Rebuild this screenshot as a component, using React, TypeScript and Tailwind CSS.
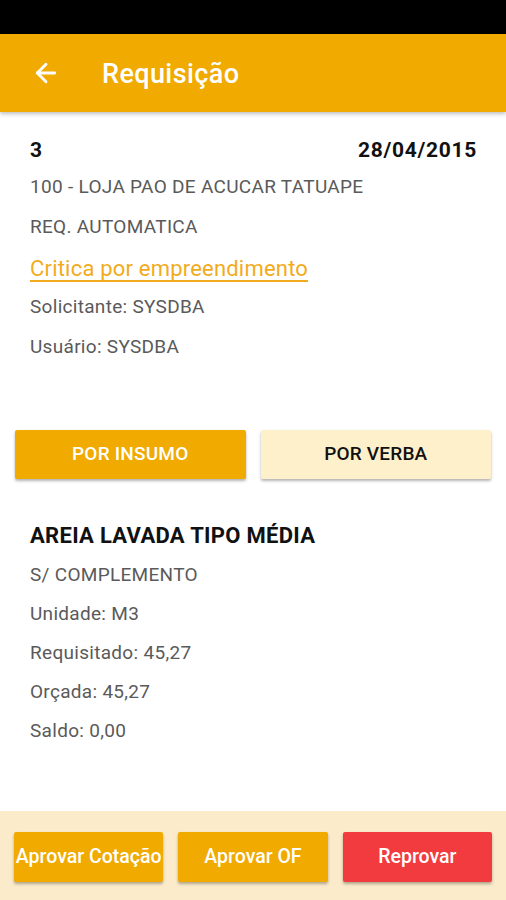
import { ArrowLeft } from 'lucide-react'

const DETAIL_LINES = ['S/ COMPLEMENTO', 'Unidade: M3', 'Requisitado: 45,27', 'Orçada: 45,27', 'Saldo: 0,00']

export default function App() {
  return (
    <div className="w-[506px] h-[900px] flex flex-col bg-white font-['Roboto',sans-serif] overflow-hidden">
      <div className="h-[34px] bg-black shrink-0" />

      {/* App bar */}
      <header className="h-[78px] shrink-0 bg-[#f0aa00] flex items-center shadow-[0_2px_4px_rgba(0,0,0,0.25)] z-10">
        <ArrowLeft className="ml-[31px] text-white" size={30} strokeWidth={2.3} />
        <h1 className="ml-[41px] mt-[2px] text-white font-medium text-[27px] tracking-[0.4px]">Requisição</h1>
      </header>

      <div className="flex-1 flex flex-col">
        {/* Requisition header */}
        <div className="px-[30px] pt-[27px]">
          <div className="flex justify-between items-center h-[24px]">
            <span className="text-[21px] font-bold text-[#111]">3</span>
            <span className="text-[21px] font-bold text-[#111] tracking-[0.7px] mr-[-1px]">28/04/2015</span>
          </div>
          <p className="mt-[12px] text-[19px] tracking-[0.3px] text-[#5a5a5a] leading-[24px]">100 - LOJA PAO DE ACUCAR TATUAPE</p>
          <p className="mt-[16px] text-[19px] tracking-[0.3px] text-[#5a5a5a] leading-[24px]">REQ. AUTOMATICA</p>
          <p className="mt-[18px] text-[22px] tracking-[0.2px] text-[#f2ab1c] underline underline-offset-[4px] decoration-[1.5px] leading-[24px]">Critica por empreendimento</p>
          <p className="mt-[14px] text-[19px] tracking-[0.3px] text-[#5a5a5a] leading-[24px]">Solicitante: SYSDBA</p>
          <p className="mt-[16px] text-[19px] tracking-[0.3px] text-[#5a5a5a] leading-[24px]">Usuário: SYSDBA</p>
        </div>

        {/* Tabs */}
        <div className="mt-[71px] px-[15px] flex gap-[15px]">
          <button className="flex-1 h-[49px] bg-[#f0aa00] text-white font-medium text-[19px] tracking-[0.2px] rounded-[2px] shadow-[0_2px_3px_rgba(0,0,0,0.3)]">
            POR INSUMO
          </button>
          <button className="flex-1 h-[49px] bg-[#fff0cc] text-[#111] font-medium text-[19px] tracking-[0.2px] rounded-[2px] shadow-[0_2px_3px_rgba(0,0,0,0.3)]">
            POR VERBA
          </button>
        </div>

        {/* Item */}
        <div className="px-[30px] pt-[45px]">
          <p className="text-[22px] font-bold tracking-[0.3px] text-[#111] leading-[24px]">AREIA LAVADA TIPO MÉDIA</p>
          {DETAIL_LINES.map(line => (
            <p key={line} className="mt-[15px] text-[19px] tracking-[0.3px] text-[#5a5a5a] leading-[24px]">{line}</p>
          ))}
        </div>
      </div>

      {/* Actions */}
      <div className="h-[89px] shrink-0 bg-[#fbebca] flex items-start px-[14px] pt-[21px] gap-[15px]">
        <button className="flex-1 h-[50px] bg-[#f0aa00] text-white font-medium text-[19.5px] tracking-[0px] rounded-[2px] shadow-[0_2px_3px_rgba(0,0,0,0.3)] whitespace-nowrap">
          Aprovar Cotação
        </button>
        <button className="flex-1 h-[50px] bg-[#f0aa00] text-white font-medium text-[19.5px] rounded-[2px] shadow-[0_2px_3px_rgba(0,0,0,0.3)]">
          Aprovar OF
        </button>
        <button className="flex-1 h-[50px] bg-[#f23b3f] text-white font-medium text-[19.5px] rounded-[2px] shadow-[0_2px_3px_rgba(0,0,0,0.3)]">
          Reprovar
        </button>
      </div>
    </div>
  )
}
